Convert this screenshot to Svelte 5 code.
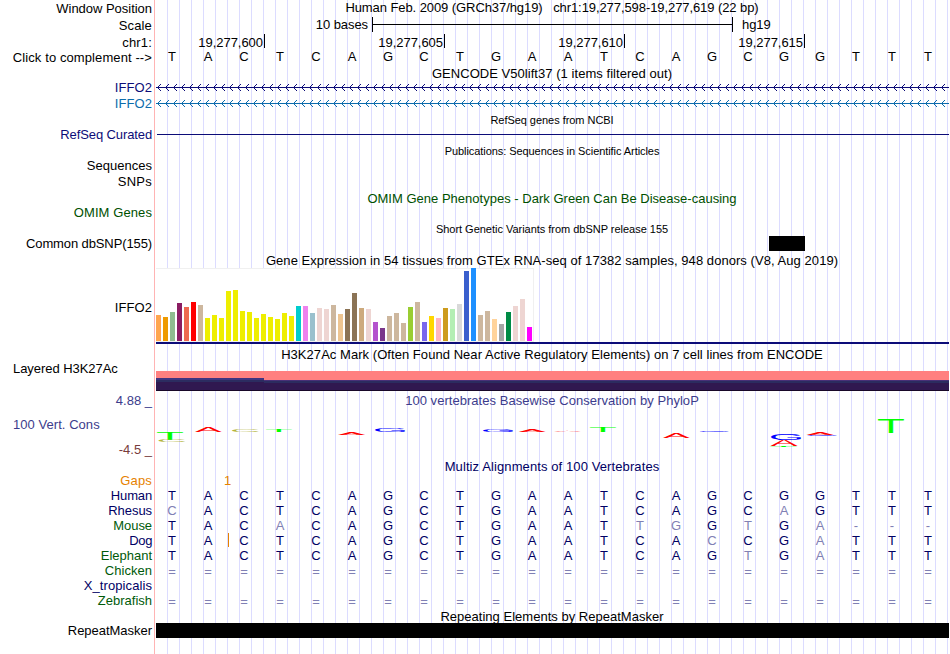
<script>
  // Spreads letter spacing so a caption occupies the given width.
  function fit(node, width) {
    if (!width) return;
    const natural = node.getBoundingClientRect().width;
    const count = node.textContent.length;
    node.style.letterSpacing = `${(width - 0.8 - natural) / count}px`;
  }

  const bases = 'TACTCAGCTGAATCAGCGGTTT'.split('');
  const ticks = ['19,277,600', '19,277,605', '19,277,610', '19,277,615'];
  const arrows = Array.from({ length: 99 }, (_, i) => 1 + i * 8);
  const arms = [1, 2, 3];
  const genes = ['#0c0c78', '#0c6cac'];

  const species = [
    { name: 'Human', w: 42, seq: 'TACTCAGCTGAATCAGCGGTTT' },
    { name: 'Rhesus', w: 44.5, seq: 'cACTCAGCTGAATCAGCaGTTT' },
    { name: 'Mouse', w: 39.5, green: true, seq: 'TACaCAGCTGAATtgGtGa---' },
    { name: 'Dog', w: 23.5, seq: 'TACTCAGCTGAATCAcCGaTTT', insert: true },
    { name: 'Elephant', w: 52, green: true, seq: 'TACTCAGCTGAATCAGtGaTTT' },
    { name: 'Chicken', w: 48, green: true, seq: '='.repeat(22) },
    { name: 'X_tropicalis', w: 69, seq: '' },
    { name: 'Zebrafish', w: 55, green: true, seq: '='.repeat(22) }
  ];

  const tissues = [
    [26, '#ffa54f'], [24, '#ee9a00'], [29, '#8fbc8f'], [38, '#8b1c62'], [34, '#ee6a50'], [39, '#ff0000'], [36, '#cdb79e'],
    [23, '#eeee00'], [26, '#eeee00'], [23, '#eeee00'], [50, '#eeee00'], [51, '#eeee00'], [30, '#eeee00'], [29, '#eeee00'],
    [23, '#eeee00'], [27, '#eeee00'], [24, '#eeee00'], [22, '#eeee00'], [28, '#eeee00'], [25, '#eeee00'], [35, '#00cdcd'],
    [35, '#ee82ee'], [28, '#9ac0cd'], [33, '#eed5d2'], [32, '#eed5d2'], [36, '#cdb79e'], [27, '#eec591'], [32, '#8b7355'],
    [48, '#8b7355'], [33, '#cdaa7d'], [32, '#eed5d2'], [19, '#b452cd'], [13, '#7a378b'], [25, '#cdb79e'], [28, '#cdb79e'],
    [18, '#cdb79e'], [34, '#9acd32'], [39, '#cdb79e'], [19, '#7a67ee'], [25, '#ffd700'], [23, '#ffb6c1'], [33, '#cd9b1d'],
    [32, '#b4eeb4'], [37, '#d9d9d9'], [70, '#3a5fcd'], [73, '#1e90ff'], [26, '#cdb79e'], [30, '#cdb79e'], [22, '#ffd39b'],
    [17, '#a6a6a6'], [29, '#008b45'], [35, '#eed5d2'], [42, '#eed5d2'], [14, '#ff00ff']
  ];

  // Conservation logo: letter, left, right, top, bottom within the plot.
  const logo = [
    ['T', 1, 27, 24, 31], ['C', 2.5, 29, 31, 33], ['A', 39, 65.5, 18, 23], ['C', 76, 102.5, 21, 23],
    ['T', 110, 136, 21, 23], ['A', 182, 209, 24, 26], ['G', 219, 249, 19, 23], ['G', 327, 357, 21, 23],
    ['A', 362.5, 389.5, 20, 23], ['A', 398, 425, 22, 23.4], ['T', 434, 460, 18, 23], ['A', 507, 533.5, 24, 29],
    ['G', 543.5, 573, 22, 23], ['G', 615, 645, 24, 31], ['A', 614.5, 641.5, 31, 37], ['T', 614, 641, 37, 38.4],
    ['A', 650.5, 677.5, 24, 26], ['G', 651, 681, 26, 27], ['T', 722, 748, 10, 24]
  ];
  const glyph = {
    T: { l: 0.21, w: 5.69, b: 0, h: 6.88, c: '#00ff00' },
    A: { l: 0.03, w: 6.62, b: 0, h: 6.88, c: '#ff0000' },
    C: { l: 0.5, w: 6.3, b: 0.1, h: 7.1, c: '#b4b43c' },
    G: { l: 0.5, w: 6.6, b: 0.1, h: 7.1, c: '#0000ff' }
  };
  function place([ch, x0, x1, y0, y1]) {
    const g = glyph[ch];
    const sx = (x1 - x0) / g.w;
    const sy = (y1 - y0) / g.h;
    return `translate(${x0 - g.l * sx} ${y1 - g.b * sy}) scale(${sx} ${sy})`;
  }
</script>

{#snippet label(text, w, tone = '', drop = 0)}
  <div class="label {tone}" style:padding-top="{drop}px"><span use:fit={w}>{text}</span></div>
{/snippet}

{#snippet caption(text, w, h, drop, tone = '')}
  <div class="row" style:height="{h}px">
    <div class="label"></div>
    <div class="track caption {tone}" style:padding-top="{drop}px"><span use:fit={w}>{text}</span></div>
  </div>
{/snippet}

<main>
  <div class="row" style:height="17px">
    {@render label('Window Position', 96.5, '', 1)}
    <div class="track caption"><span use:fit={414}>Human Feb. 2009 (GRCh37/hg19)&nbsp;&nbsp; chr1:19,277,598-19,277,619 (22 bp)</span></div>
  </div>

  <div class="row" style:height="17px">
    {@render label('Scale', 34, '', 1)}
    <div class="track scale">
      <span class="before"><span use:fit={53}>10 bases</span></span>
      <i class="ruler"></i>
      <span use:fit={29.5}>hg19</span>
    </div>
  </div>

  <div class="row" style:height="15px">
    {@render label('chr1:', 30.5, '', 1)}
    <div class="track ticks">
      {#each ticks as t}
        <div class="tick"><span use:fit={65.5}>{t}</span></div>
      {/each}
    </div>
  </div>

  <div class="row" style:height="16px">
    {@render label('Click to complement -->', 140, '', 1)}
    <div class="track bases">
      {#each bases as b}<b>{b}</b>{/each}
    </div>
  </div>

  {@render caption('GENCODE V50lift37 (1 items filtered out)', 241, 15, 1)}

  {#each genes as color, i}
    <div class="row" style:height="16px">
      {@render label('IFFO2', 38, i ? 'sky' : 'navy')}
      <svg class="track" width="793" height="15" stroke={color} fill="none" shape-rendering="crispEdges">
        <path d="M0 7.5H793" />
        {#each arrows as x}
          {#each arms as n}
            <path d="M{x + n} {7.5 - n}h1M{x + n} {7.5 + n}h1" />
          {/each}
        {/each}
      </svg>
    </div>
  {/each}

  {@render caption('RefSeq genes from NCBI', 124, 15, 1, 'small')}
  <div class="row" style:height="16px">
    {@render label('RefSeq Curated', 92.5, 'navy')}
    <div class="track"><i class="thin"></i></div>
  </div>
  {@render caption('Publications: Sequences in Scientific Articles', 215.5, 15, 1, 'small')}
  <div class="row" style:height="16px">{@render label('Sequences', 66)}</div>
  <div class="row" style:height="16px">{@render label('SNPs', 35)}</div>
  {@render caption('OMIM Gene Phenotypes - Dark Green Can Be Disease-causing', 370, 15, 1, 'forest')}
  <div class="row" style:height="16px">{@render label('OMIM Genes', 79, 'forest')}</div>
  {@render caption('Short Genetic Variants from dbSNP release 155', 233, 15, 1, 'small')}
  <div class="row" style:height="16px">
    {@render label('Common dbSNP(155)', 126.8)}
    <div class="track"><i class="variant"></i></div>
  </div>
  {@render caption('Gene Expression in 54 tissues from GTEx RNA-seq of 17382 samples, 948 donors (V8, Aug 2019)', 573, 16, 1)}

  <div class="row" style:height="76px">
    {@render label('IFFO2', 38, '', 32)}
    <div class="track">
      <div class="chart">
        {#each tissues as [h, color]}<i style:height="{h}px" style:background={color}></i>{/each}
      </div>
      <div class="model"></div>
    </div>
  </div>

  {@render caption('H3K27Ac Mark (Often Found Near Active Regulatory Elements) on 7 cell lines from ENCODE', 542.5, 17, 3)}
  <div class="row" style:height="31px">
    <div class="label left"><span use:fit={105.5}>Layered H3K27Ac</span></div>
    <div class="track marks">
      <i class="first"></i>
      <i class="rest"></i>
    </div>
  </div>

  <div class="row" style:height="66px">
    <div class="label axis">
      <span class="top">4.88 _</span>
      <span class="mid"><span use:fit={87.5}>100 Vert. Cons</span></span>
      <span class="bottom">-4.5 _</span>
    </div>
    <div class="track">
      <div class="caption indigo plot-title"><span use:fit={294.5}>100 vertebrates Basewise Conservation by PhyloP</span></div>
      <svg class="logo" width="793" height="46">
        {#each logo as item}
          <text transform={place(item)} fill={glyph[item[0]].c}>{item[0]}</text>
        {/each}
      </svg>
    </div>
  </div>

  {@render caption('Multiz Alignments of 100 Vertebrates', 215.5, 15, 1, 'deep')}
  <div class="row" style:height="15px">
    {@render label('Gaps', 32.5, 'orange')}
    <div class="track orange gaps">1</div>
  </div>
  {#each species as s}
    <div class="row" style:height="15px">
      {@render label(s.name, s.w, s.green ? 'leaf' : 'deep')}
      <div class="track bases deep" class:same={s.seq[0] === '='}>
        {#each s.seq.split('') as b, i}
          <b class:faded={b === '=' || b === '-' || b !== b.toUpperCase()} class:insert={s.insert && i === 1}>{b.toUpperCase()}</b>
        {/each}
      </div>
    </div>
  {/each}
  {@render caption('Repeating Elements by RepeatMasker', 224, 15, 1)}
  <div class="row" style:height="15px">
    {@render label('RepeatMasker', 85)}
    <div class="track repeat"></div>
  </div>
</main>

<style>
  :global(body) {
    margin: 0;
    background: #fff;
  }
  main {
    box-sizing: border-box;
    width: 950px;
    height: 654px;
    overflow: hidden;
    font: 13px/15px 'Liberation Sans', Arial, sans-serif;
    color: #000;
    white-space: nowrap;
    background:
      linear-gradient(#ffb4b4, #ffb4b4) 154px 0 / 1px 100% no-repeat,
      repeating-linear-gradient(90deg, #dcdcff 0 1px, transparent 1px 12px) 167px 0 / 782px 100% no-repeat;
  }
  .row {
    display: flex;
    gap: 4px;
  }
  .label {
    box-sizing: border-box;
    flex: none;
    width: 152px;
    text-align: right;
  }
  .label.left {
    text-align: left;
    padding-left: 13px;
  }
  .track {
    box-sizing: border-box;
    flex: none;
    width: 793px;
  }
  i {
    display: block;
  }
  .caption {
    text-align: center;
    padding-right: 1px;
  }
  .small {
    font-size: 11px;
  }
  .navy { color: #0c0c78; }
  .sky { color: #0c6cac; }
  .forest { color: #005000; }
  .leaf { color: #005a0a; }
  .deep { color: #000064; }
  .indigo { color: #3c3c8c; }
  .orange { color: #e68200; }

  .scale {
    display: flex;
  }
  .before {
    width: 216px;
    padding-right: 4px;
    box-sizing: border-box;
    text-align: right;
    flex: none;
  }
  .ruler {
    box-sizing: border-box;
    width: 361px;
    height: 15px;
    margin-right: 9px;
    border: solid #000;
    border-width: 0 1px;
    background: linear-gradient(#000, #000) 0 7px / 100% 1px no-repeat;
  }
  .ticks {
    display: flex;
  }
  .tick {
    box-sizing: border-box;
    width: 180px;
    height: 14px;
    padding: 1px 1px 0 0;
    border-right: 1px solid #000;
    text-align: right;
  }
  .tick:first-child {
    width: 109px;
  }
  .bases {
    display: flex;
    margin-left: -2px;
  }
  .bases b {
    width: 36px;
    font-weight: 400;
    text-align: center;
  }
  .same {
    padding-top: 1px;
  }
  .bases .faded {
    color: #8080b4;
  }
  .bases .insert {
    background: linear-gradient(#e68200, #e68200) 38px -1px / 1px 15px no-repeat;
    padding-right: 3px;
    margin-right: -3px;
  }
  .thin {
    height: 1px;
    margin: 7px 0 0 1px;
    background: #0c0c78;
  }
  .variant {
    width: 36px;
    height: 15px;
    margin-left: 613px;
    background: #000;
  }
  .chart {
    box-sizing: border-box;
    width: 378px;
    height: 74px;
    display: flex;
    align-items: flex-end;
    gap: 2px;
    background: #fff;
    border: solid #f0f0f0;
    border-width: 1px 1px 1px 0;
  }
  .chart i {
    flex: none;
    width: 5px;
  }
  .model {
    height: 2px;
    background: #0c0c78;
  }
  .marks {
    display: flex;
    align-items: flex-end;
    height: 20px;
    margin-top: 10px;
    background: #ff8080;
  }
  .first {
    width: 108px;
    height: 13px;
    background: linear-gradient(#403480 0 2px, #2c2c60 2px 4px, #301850 4px 12px, #180828 12px);
  }
  .rest {
    flex: 1;
    height: 11px;
    background: linear-gradient(#483078 0 1px, #2c2c60 1px 3px, #301850 3px 10px, #180828 10px);
  }
  .axis {
    display: flex;
    flex-direction: column;
    align-items: flex-end;
    padding-top: 1px;
    color: #3c3c8c;
  }
  .mid {
    align-self: flex-start;
    padding-left: 13px;
    margin: 9px 0 10px;
  }
  .bottom {
    color: #783c3c;
  }
  .plot-title {
    padding-top: 1px;
  }
  .logo {
    display: block;
    margin-top: 1px;
  }
  .logo text {
    font: 10px 'Liberation Sans', Arial, sans-serif;
  }
  .gaps {
    padding-left: 68px;
  }
  .repeat {
    background: #000;
  }
</style>
